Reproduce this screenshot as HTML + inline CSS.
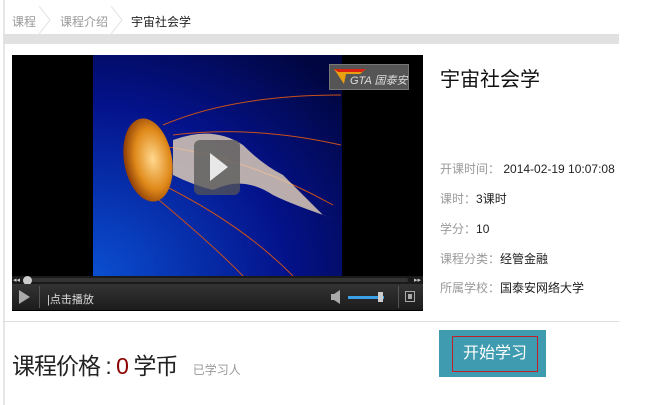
<!DOCTYPE html>
<html><head><meta charset="utf-8"><style>
*{margin:0;padding:0;box-sizing:border-box}
body{width:645px;height:405px;background:#fff;font-family:"Liberation Sans","Noto Sans CJK SC",sans-serif;position:relative;overflow:hidden}
.a{position:absolute}
.crumb{font-size:12px;top:13px;color:#999}
.lbl{font-size:12px;color:#999;left:440px}
.lbl b{font-weight:normal;color:#222}
</style></head><body>
<div class="a" style="left:3px;top:0;width:2px;height:405px;background:#e6e6e6"></div>
<div class="a crumb" style="left:12px">课程</div>
<svg class="a" style="left:38px;top:6px" width="14" height="28"><path d="M1 0 L12 14 L1 28" fill="none" stroke="#e2e2e2"/></svg>
<div class="a crumb" style="left:60px">课程介绍</div>
<svg class="a" style="left:110px;top:6px" width="14" height="28"><path d="M1 0 L12 14 L1 28" fill="none" stroke="#e2e2e2"/></svg>
<div class="a crumb" style="left:131px;color:#222">宇宙社会学</div>
<div class="a" style="left:3px;top:34px;width:616px;height:10px;background:#e1e1e1"></div>

<div class="a" style="left:12px;top:55px;width:411px;height:256px;background:#000"></div>
<svg class="a" style="left:93px;top:55px" width="249" height="221">
<defs><radialGradient id="g" cx="0" cy="1" r="1.3"><stop offset="0" stop-color="#0a4fd0"/><stop offset="0.6" stop-color="#04128a"/><stop offset="1" stop-color="#010640"/></radialGradient>
<radialGradient id="j" cx="0.6" cy="0.5" r="0.6"><stop offset="0" stop-color="#ffd890"/><stop offset="0.6" stop-color="#e08a1a"/><stop offset="1" stop-color="#8a3a05"/></radialGradient></defs>
<rect width="249" height="221" fill="url(#g)"/>
<g fill="none" stroke="#c8501a" stroke-width="1">
<path d="M70 70 Q140 40 248 40"/><path d="M80 80 Q160 70 248 90"/><path d="M60 90 Q150 100 240 150"/><path d="M70 130 Q150 170 200 221"/><path d="M60 140 Q120 190 150 221"/></g>
<ellipse cx="55" cy="105" rx="24" ry="42" fill="url(#j)" transform="rotate(-10 55 105)"/>
<path d="M80 85 Q120 70 150 90 Q170 110 190 120 Q210 140 230 160 L245 165 Q200 150 180 140 Q150 120 120 135 Q100 130 80 120Z" fill="#e8d4b8" opacity="0.8"/>
<rect x="101" y="85" width="46" height="55" rx="6" fill="#555" opacity="0.75"/>
<path d="M117 98 L135 112 L117 126Z" fill="#e8e8e8"/>
</svg>
<div class="a" style="left:329px;top:64px;width:80px;height:26px;background:#555;border:1px solid #777"></div>
<svg class="a" style="left:332px;top:66px" width="76" height="22"><path d="M2 3 L34 3 L28 8 L14 8 L12 18Z" fill="#e8a010"/><path d="M2 3 L34 3 L30 6 L6 6Z" fill="#d21"/><text x="18" y="18" font-size="11" fill="#ddd" font-family="Liberation Sans,Noto Sans CJK SC,sans-serif" font-style="italic">GTA 国泰安</text></svg>
<div class="a" style="left:12px;top:276px;width:411px;height:8px;background:#1a1a1a"></div>
<div class="a" style="left:30px;top:278px;width:378px;height:4px;background:#333;border-radius:2px"></div>
<div class="a" style="left:23px;top:276px;width:9px;height:9px;background:#ccc;border-radius:50%"></div>
<div class="a" style="left:13px;top:276px;font-size:7px;color:#ccc">◂◂</div>
<div class="a" style="left:414px;top:276px;font-size:7px;color:#ccc">▸▸</div>
<div class="a" style="left:12px;top:284px;width:411px;height:26px;background:linear-gradient(#333,#1c1c1c)"></div>
<svg class="a" style="left:18px;top:289px" width="14" height="16"><path d="M1 1 L12 8 L1 15Z" fill="#aaa"/></svg>
<div class="a" style="left:39px;top:286px;width:1px;height:22px;background:#555"></div>
<div class="a" style="left:47px;top:291px;font-size:11px;color:#ddd">|点击播放</div>
<svg class="a" style="left:330px;top:290px" width="12" height="14"><path d="M1 4 H4 L10 0 V14 L4 10 H1Z" fill="#aaa"/></svg>
<div class="a" style="left:348px;top:296px;width:36px;height:3px;background:#3aa0e8"></div>
<div class="a" style="left:378px;top:292px;width:5px;height:10px;background:#ccc"></div>
<div class="a" style="left:398px;top:286px;width:1px;height:22px;background:#555"></div>
<div class="a" style="left:405px;top:291px;width:10px;height:11px;border:1px solid #aaa"><div style="margin:2px;width:4px;height:5px;background:#aaa"></div></div>

<div class="a" style="left:440px;top:63px;font-size:20px;color:#111">宇宙社会学</div>
<div class="a lbl" style="top:160px">开课时间： <b>2014-02-19 10:07:08</b></div>
<div class="a lbl" style="top:190px">课时：<b>3课时</b></div>
<div class="a lbl" style="top:220px">学分：<b>10</b></div>
<div class="a lbl" style="top:250px">课程分类：<b>经管金融</b></div>
<div class="a lbl" style="top:279px">所属学校：<b>国泰安网络大学</b></div>

<div class="a" style="left:3px;top:321px;width:616px;height:1px;background:#ddd"></div>
<div class="a" style="left:12px;top:347px;font-size:23px;color:#222;white-space:nowrap;letter-spacing:-1px">课程价格 : <span style="color:#8b0000">0</span> 学币 <span style="font-size:12px;color:#999;margin-left:10px;letter-spacing:0">已学习人</span></div>
<div class="a" style="left:439px;top:330px;width:107px;height:47px;background:#3e9bb0"></div>
<div class="a" style="left:452px;top:336px;width:86px;height:36px;border:1px solid #c0202a;color:#fff;font-size:16px;text-align:center;line-height:34px">开始学习</div>
</body></html>
